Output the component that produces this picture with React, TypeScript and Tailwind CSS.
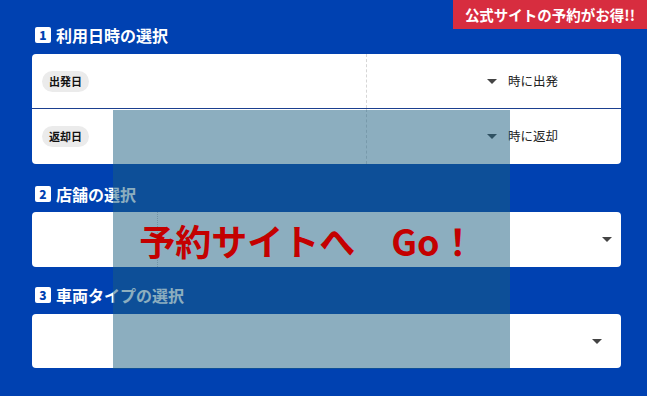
import React from 'react';

const Caret = () => (
    <span className="inline-block w-0 h-0 border-l-[5px] border-r-[5px] border-t-[5px] border-l-transparent border-r-transparent border-t-[#444]" />
);

const Heading = ({ num, label }: { num: string; label: string }) => (
    <div className="flex items-center h-4 pl-[3px]">
        <span className="flex items-center justify-center w-4 h-4 rounded-[2px] bg-white text-[#0041b1] text-[12px] font-black leading-none">
            {num}
        </span>
        <span className="ml-[5px] text-white text-[16px] font-bold leading-none">{label}</span>
    </div>
);

const DateRow = ({ tag, suffix, height }: { tag: string; suffix: string; height: string }) => (
    <div className={`flex ${height}`}>
        <div className="w-[335px] flex items-center pl-[10px] border-r border-dashed border-[#d6d6d6]">
            <span className="px-[7px] h-[21px] flex items-center rounded-full bg-[#ebebeb] text-[11px] font-bold text-[#111]">
                {tag}
            </span>
        </div>
        <div className="flex-1 flex items-center justify-end pr-[63px]">
            <Caret />
            <span className="ml-[11px] text-[12.5px] text-[#222]">{suffix}</span>
        </div>
    </div>
);

const App = () => {
    return (
        <div
            className="relative w-[647px] h-[396px] overflow-hidden bg-[#0041b1]"
            style={{ fontFamily: '"Noto Sans CJK JP", "Noto Sans", sans-serif' }}
        >
            {/* Promo badge */}
            <div className="absolute top-0 right-0 w-[194px] h-[29px] flex items-center justify-center bg-[#d72d3f] text-white text-[14.5px] font-bold">
                公式サイトの予約がお得!!
            </div>

            <div className="flex flex-col pl-8 pr-[26px] pt-[27px]">
                <Heading num="1" label="利用日時の選択" />

                <div className="mt-[11px] bg-white rounded-[4px] flex flex-col overflow-hidden">
                    <DateRow tag="出発日" suffix="時に出発" height="h-[54px]" />
                    <div className="h-px bg-[#1b3f8f]" />
                    <DateRow tag="返却日" suffix="時に返却" height="h-[55px]" />
                </div>

                <div className="mt-[22px]">
                    <Heading num="2" label="店舗の選択" />
                </div>
                <div className="mt-[10px] h-[55px] bg-white rounded-[4px] flex items-center">
                    <div className="w-[126px] h-full border-r border-dotted border-[#c8c8c8]" />
                    <div className="flex-1 flex justify-end pr-[9px]">
                        <Caret />
                    </div>
                </div>

                <div className="mt-[20px]">
                    <Heading num="3" label="車両タイプの選択" />
                </div>
                <div className="mt-[11px] h-[54px] bg-white rounded-[4px] flex items-center justify-end pr-[19px]">
                    <Caret />
                </div>
            </div>

            {/* Overlay link */}
            <div className="absolute left-[113px] top-[110px] w-[397px] h-[259px] bg-[rgba(26,93,127,0.5)] flex items-center justify-center pr-[8px]">
                <span className="text-[#c40000] text-[36px] font-bold leading-none">予約サイトへ　Go！</span>
            </div>
        </div>
    );
};

export default App;
